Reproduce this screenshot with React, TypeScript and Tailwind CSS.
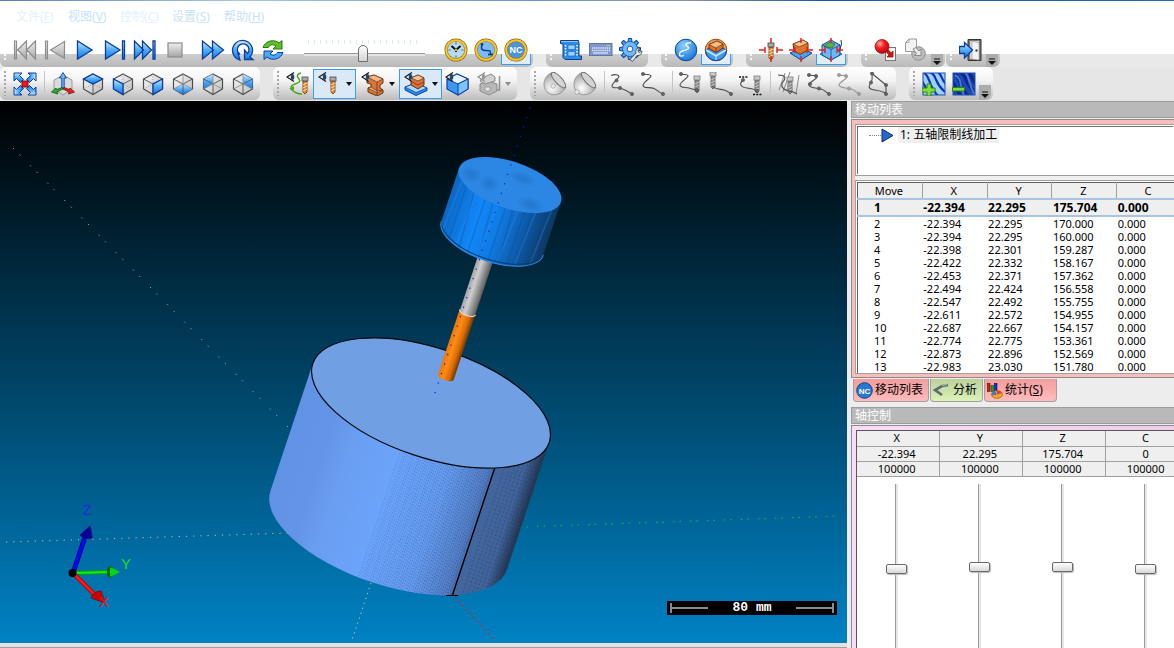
import { useState, type ReactNode } from "react";
import clsx from "clsx";

const MENUS = [
  { label: "文件", key: "F", tone: "text-[#e2f0f9]" },
  { label: "视图", key: "V", tone: "text-[#c6e2f6]" },
  { label: "控制", key: "C", tone: "text-[#e2f0f9]" },
  { label: "设置", key: "S", tone: "text-[#c6e2f6]" },
  { label: "帮助", key: "H", tone: "text-[#c6e2f6]" },
];

const MOVES = [
  ["1", "-22.394", "22.295", "175.704", "0.000"],
  ["2", "-22.394", "22.295", "170.000", "0.000"],
  ["3", "-22.394", "22.295", "160.000", "0.000"],
  ["4", "-22.398", "22.301", "159.287", "0.000"],
  ["5", "-22.422", "22.332", "158.167", "0.000"],
  ["6", "-22.453", "22.371", "157.362", "0.000"],
  ["7", "-22.494", "22.424", "156.558", "0.000"],
  ["8", "-22.547", "22.492", "155.755", "0.000"],
  ["9", "-22.611", "22.572", "154.955", "0.000"],
  ["10", "-22.687", "22.667", "154.157", "0.000"],
  ["11", "-22.774", "22.775", "153.361", "0.000"],
  ["12", "-22.873", "22.896", "152.569", "0.000"],
  ["13", "-22.983", "23.030", "151.780", "0.000"],
];

const AXES = [
  { name: "X", value: "-22.394" },
  { name: "Y", value: "22.295" },
  { name: "Z", value: "175.704" },
  { name: "C", value: "0" },
];

/* ---------- icons ---------- */

const BLUE = "#0b3f9e";

function Icon({ children }: { children: ReactNode }) {
  return (
    <svg width="24" height="24" viewBox="0 0 24 24" className="relative shrink-0" aria-hidden="true">
      {children}
    </svg>
  );
}

function Defs() {
  return (
    <svg width="0" height="0" className="absolute" aria-hidden="true">
      <defs>
        <linearGradient id="blue" x1="0" y1="0" x2="0" y2="1">
          <stop offset="0" stopColor="#d6ecff" />
          <stop offset="0.45" stopColor="#5cb0f8" />
          <stop offset="1" stopColor="#0a78e8" />
        </linearGradient>
        <linearGradient id="gray" x1="0" y1="0" x2="0" y2="1">
          <stop offset="0" stopColor="#f0f0f0" />
          <stop offset="1" stopColor="#a4a4a4" />
        </linearGradient>
        <linearGradient id="face" x1="0" y1="0" x2="1" y2="1">
          <stop offset="0" stopColor="#fafafa" />
          <stop offset="1" stopColor="#bdbdbd" />
        </linearGradient>
        <radialGradient id="ball" cx="0.4" cy="0.3" r="0.8">
          <stop offset="0" stopColor="#8fd0ff" />
          <stop offset="1" stopColor="#0b69d4" />
        </radialGradient>
        <radialGradient id="red" cx="0.35" cy="0.3" r="0.8">
          <stop offset="0" stopColor="#ffb0a8" />
          <stop offset="0.4" stopColor="#f52020" />
          <stop offset="1" stopColor="#b00008" />
        </radialGradient>
        <radialGradient id="dish" cx="0.35" cy="0.7" r="0.8">
          <stop offset="0" stopColor="#ffffff" />
          <stop offset="1" stopColor="#8e8e8e" />
        </radialGradient>
      </defs>
    </svg>
  );
}

const GRAY_STROKE = { fill: "url(#gray)", stroke: "#8c8c8c", strokeWidth: 1.2 };
const BLUE_STROKE = { fill: "url(#blue)", stroke: BLUE, strokeWidth: 1.3 };

const SkipStart = () => (
  <Icon>
    <path d="M1.5 3h2v18h-2zM13.5 3v18L4.5 12zM22.5 3v18L13.5 12z" {...GRAY_STROKE} />
  </Icon>
);
const StepBack = () => (
  <Icon>
    <path d="M2.5 3h2v18h-2zM21.5 3.5v17L7.5 12z" {...GRAY_STROKE} />
  </Icon>
);
const Play = () => (
  <Icon>
    <path d="M4.5 3v18L19 12z" {...BLUE_STROKE} />
  </Icon>
);
const StepNext = () => (
  <Icon>
    <path d="M2.5 3v18L17 12zM19.5 3h2v18h-2z" {...BLUE_STROKE} />
  </Icon>
);
const SkipEnd = () => (
  <Icon>
    <path d="M1.5 3v18L10.5 12zM9.5 3v18L18.5 12zM20 3h2v18h-2z" {...BLUE_STROKE} />
  </Icon>
);
const Stop = () => (
  <Icon>
    <rect x="5" y="5" width="14" height="14" {...GRAY_STROKE} />
  </Icon>
);
const Forward = () => (
  <Icon>
    <path d="M1.5 3v18L12.5 12zM11.5 3v18L22.5 12z" {...BLUE_STROKE} />
  </Icon>
);
const Loop = () => (
  <Icon>
    <path
      d="M9 22A10 10 0 1 1 19 19l3 2.5H13.5V12l3 3.5A5.8 5.8 0 1 0 9 16.5L6.5 13.5 9 22z"
      {...BLUE_STROKE}
    />
  </Icon>
);
const Refresh = () => (
  <Icon>
    <path d="M2 9.5C4 3 13 .5 18 5l3-2.5V11H12l3-3c-3-2-6-1.5-7.5 1.5z" fill="#5cc02c" stroke="#2d7a0c" />
    <path d="M22 14.5C20 21 11 23.5 6 19l-3 2.5V13h9l-3 3c3 2 6 1.5 7.5-1.5z" fill="#4aa8f6" stroke={BLUE} />
  </Icon>
);

function GoldRing({ children }: { children: ReactNode }) {
  return (
    <Icon>
      <circle cx="12" cy="12" r="11.5" fill="#8a6410" />
      <circle cx="12" cy="12" r="10.8" fill="#f7c52c" />
      <circle cx="12" cy="12" r="8.8" fill="#9a7410" />
      {children}
    </Icon>
  );
}
const Clock = () => (
  <GoldRing>
    <circle cx="12" cy="12" r="8.3" fill="#b4dcfa" />
    <path d="M12 4.5v2M12 17.5v2M4.5 12h2M17.5 12h2" stroke="#3c6ca0" strokeWidth="1.2" />
    <path d="M7.5 8l4.5 4 4.5-4M12 12v2" stroke="#111" strokeWidth="2" fill="none" />
    <circle cx="12" cy="12" r="1.3" fill="#e8b010" />
  </GoldRing>
);
const ToolPath = () => (
  <GoldRing>
    <circle cx="12" cy="12" r="8.3" fill="#7cbcf4" />
    <path d="M8 7c-1.5 4 0 5.500 4 5.500s4.500 0 4.500 3.500" stroke="#0a3c94" strokeWidth="1.400" fill="none" />
    <circle cx="8" cy="6.500" r="1.400" fill="#0a3c94" />
    <path d="M14 16.500h5" stroke="#0a3c94" strokeWidth="1.800" />
  </GoldRing>
);
const NcMode = () => (
  <GoldRing>
    <circle cx="12" cy="12" r="8.3" fill="#4c92dc" />
    <text x="12" y="15" textAnchor="middle" fontSize="9" fontWeight="700" fill="#fff" fontFamily="Liberation Sans">
      NC
    </text>
  </GoldRing>
);

const Film = () => (
  <Icon>
    <path d="M1.500 2.500h18l.5 3v12.500h2.500v3.500H6l-2-2V6L1.500 5.500z" fill="#2b8df0" stroke="#123c84" />
    <path d="M9 7h7v4.500H9zM9 13.500h7v4.500H9z" fill="#9cd2ff" stroke="#1458b0" strokeWidth=".6" />
    <path d="M6.500 7v12M18 7v12" stroke="#fff" strokeWidth="1.500" strokeDasharray="1.500 1.500" />
    <path d="M2 3.500h17" stroke="#8cc8fa" />
  </Icon>
);
const Keyboard = () => (
  <Icon>
    <rect x=".5" y="5.500" width="22.500" height="12" fill="#8296cc" stroke="#5f74ae" />
    <path d="M3 10h18M3 12.500h18" stroke="#e4ebfb" strokeWidth="1.300" strokeDasharray="1.300 .8" />
    <path d="M4 15h15" stroke="#e4ebfb" strokeWidth="1.200" />
    <path d="M17 7.500h4" stroke="#9ad868" />
  </Icon>
);
const Settings = () => (
  <Icon>
    <g transform="translate(11 11)">
      {[0, 45, 90, 135, 180, 225, 270, 315].map((a) => (
        <path key={a} d="M-2.2-6l.7-4.5h3l.7 4.5z" fill="#4da6f2" stroke={BLUE} transform={`rotate(${a})`} />
      ))}
      <circle r="7.5" fill="#6cbaf8" stroke={BLUE} strokeWidth=".6" />
      <circle r="2.8" fill="#fff" stroke={BLUE} strokeWidth=".8" />
    </g>
    <path
      d="M11 21.5l6-6.5c-1-3 1-5.500 4-5l-2 2.500 1 2 3-1.500c0 3-2 5-5 4.500L13.500 23.500z"
      fill="#e6e6e6"
      stroke="#4c4c4c"
      strokeWidth=".9"
    />
  </Icon>
);

const PathBall = () => (
  <Icon>
    <circle cx="12" cy="12" r="10.8" fill="url(#ball)" stroke="#084aa0" />
    <path d="M17 5c-5-.5-6 1-4.500 2.500s3.500 2.500.5 4-7 1-7.500 4 2 3 4.500 2" stroke="#fff" strokeWidth="1.300" fill="none" />
  </Icon>
);
const StockBall = () => (
  <Icon>
    <circle cx="12" cy="12" r="10.8" fill="#f0a05c" stroke="#a04810" />
    <path d="M1.500 12l4.500-2 6 4 6-4 4.500 2A10.500 10.500 0 0 1 12 22.500 10.500 10.500 0 0 1 1.500 12z" fill="#3a9cf2" stroke={BLUE} />
    <path d="M2 12l10 6 10-6" stroke="#d4ecff" strokeWidth="1.500" fill="none" />
    <path d="M5 6.500l8-3.500 6 3v4l-7 4.500-7-4z" fill="#d9732c" stroke="#70300a" />
    <path d="M5 6.500l7 3.500 7-4-6-3z" fill="#f6bd8a" stroke="#70300a" strokeWidth=".7" />
    <path d="M12 10v4" stroke="#70300a" strokeWidth=".8" />
    <path d="M12 18v4" stroke="#d4ecff" />
  </Icon>
);

function Cross() {
  return <path d="M12 0v5M12 18v6M0 12h6M18 12h6M6 9v6M18 9v6" stroke="#f01c1c" strokeWidth="1.5" fill="none" />;
}
function Mill({ x = 0, y = 0, gray }: { x?: number; y?: number; gray?: boolean }) {
  return (
    <g transform={`translate(${x} ${y})`}>
      <path d="M2 6h4v11l-2 2-2-2z" fill={gray ? "#8c8c8c" : "#f08a2c"} stroke={gray ? "#555" : "#6c3408"} strokeWidth=".8" />
      <path d="M2 10l4-2M2 13l4-2M2 16l4-2" stroke={gray ? "#d4d4d4" : "#fff0c8"} strokeWidth=".9" />
      <rect x="1" y="2" width="6" height="4" fill={gray ? "#c8c8c8" : "#ababab"} stroke={gray ? "#808080" : "#484848"} strokeWidth=".8" />
    </g>
  );
}
const ToolCenter = () => (
  <Icon>
    <Mill x={8} y={3} />
    <Cross />
  </Icon>
);
const StockCenter = () => (
  <Icon>
    <path d="M1 15l11-5 11 5-11 7z" fill="#49a2f0" stroke={BLUE} />
    <path d="M4 6l10-4 5 3v7l-8 4.500-6-4z" fill="#d9762e" stroke="#713208" />
    <path d="M4 6l6 3 9-4-5-3z" fill="#f5bf8c" stroke="#713208" strokeWidth=".7" />
    <Cross />
  </Icon>
);
const MachineCenter = () => (
  <Icon>
    <path d="M1 16l11-6 11 6-11 6z" fill="#c9dff2" stroke="#346292" />
    <path d="M3 7l9-5 9 5v10l-9 5-9-5z" fill="#6cb8f2" stroke="#0d4e9c" />
    <path d="M3 7l9 4.500L21 7M12 11.500V22" stroke="#0d4e9c" strokeWidth=".8" fill="none" />
    <path d="M5 8l6-4 5 2-3 4-5-1z" fill="#54b43e" stroke="#1d6430" strokeWidth=".7" />
    <path d="M22 2l.5 4-2.500 8" stroke="#333" fill="none" />
    <Cross />
  </Icon>
);

const RedBallExport = () => (
  <Icon>
    <rect x="11.5" y="9.5" width="10" height="13" fill="#f4f4f4" stroke="#777" />
    <circle cx="8" cy="8.500" r="7" fill="url(#red)" stroke="#960c0c" strokeWidth=".7" />
    <path d="M12 13.500l2.500-1.500 2.500 3 2-2v6h-6l2-2z" fill="#d81414" stroke="#800" strokeWidth=".7" />
  </Icon>
);
const DocExport = () => (
  <Icon>
    <circle cx="14.500" cy="15.500" r="6.800" fill="#bcbcbc" stroke="#909090" />
    <path d="M1.500 4.500l3.500-3.500h7.500v12.500h-11z" fill="#f2f2f2" stroke="#9a9a9a" />
    <path d="M5 1v3.500H1.500" stroke="#9a9a9a" strokeWidth=".8" fill="none" />
    <path d="M9 11l3-1.500 3 3.500 2-2v6.500h-6.500l2-2z" fill="#e8e8e8" stroke="#8c8c8c" />
  </Icon>
);
const Exit = () => (
  <Icon>
    <path d="M9 1.500h13v21H9z" fill="#777" stroke="#333" />
    <path d="M11 3h9v18h-9z" fill="#d7d7d7" />
    <path d="M13 3l7 2v17l-7-1z" fill="#f4f4f4" stroke="#999" strokeWidth=".6" />
    <circle cx="17.500" cy="12.500" r="1.200" fill="#444" />
    <path d="M.5 8.500h5V4.500L13.500 12l-8 8v-4.500h-5z" {...BLUE_STROKE} />
  </Icon>
);

const FitAll = () => (
  <Icon>
    {[0, 90, 180, 270].map((a) => (
      <path
        key={a}
        d="M1 1h8L6.500 3.500l4 4-3 3-4-4L1 9z"
        {...BLUE_STROKE}
        strokeWidth="1"
        transform={`rotate(${a} 12 12)`}
      />
    ))}
    <rect x="9" y="9" width="6" height="6" fill="#e41c1c" stroke="#8c0808" />
  </Icon>
);
const IsoAxes = () => (
  <Icon>
    <path d="M12 3l9 5v9l-9 6-9-6V8z" fill="#dadada" stroke="#888" strokeWidth=".8" />
    <path d="M12 .5l3.500 5.500h-2.300v10h-2.400V6H8.500z" fill="#72b8f8" stroke={BLUE} strokeWidth=".9" />
    <path d="M11 15.500l-5.500 2-.5-1.500L.5 20l6 2-.5-2 6-3z" fill="#2eaa2e" stroke="#0c5a10" strokeWidth=".8" />
    <path d="M13 15.500l5.500 2 .5-1.500 4.500 4-6 2 .5-2-6-3z" fill="#e02222" stroke="#7c0808" strokeWidth=".8" />
  </Icon>
);

const FACES = {
  top: "M12 2l9.5 5L12 12 2.5 7z",
  left: "M2.5 7L12 12v10.5L2.5 17z",
  right: "M21.5 7L12 12v10.5l9.5-5.5z",
  bottom: "M2.5 17L12 12l9.5 5-9.5 5.5z",
  backLeft: "M2.5 7L12 2v10l-9.5 5z",
  backRight: "M21.5 7L12 2v10l9.5 5z",
};

function Cube({ face }: { face: keyof typeof FACES }) {
  const hidden = face === "bottom" || face === "backLeft" || face === "backRight";
  return (
    <Icon>
      <path d="M12 2l9.5 5v10L12 22.5 2.5 17V7z" fill="url(#face)" stroke="#4c4c4c" strokeWidth="1.2" />
      <path d={FACES[face]} fill="url(#blue)" />
      <path d="M2.5 7L12 12l9.5-5M12 12v10.5" stroke="#5c5c5c" fill="none" />
      <path d="M12 2v10M2.5 17L12 12l9.5 5" stroke="#888" strokeWidth=".8" strokeDasharray={hidden ? undefined : "1 1.5"} fill="none" />
      {!hidden && <path d={FACES[face]} fill="url(#blue)" stroke={BLUE} strokeWidth="1.3" />}
    </Icon>
  );
}

function Eye({ gray }: { gray?: boolean }) {
  return (
    <g>
      <path d="M8 .5L1 5l7 4.5" stroke={gray ? "#888" : "#111"} strokeWidth="1.2" fill="#fff" />
      <ellipse cx="6.5" cy="5" rx="1.8" ry="3" fill={gray ? "#999" : "#1e4868"} />
    </g>
  );
}
const EyePath = () => (
  <Icon>
    <path d="M15 1c-5 1-4 4-2 6s0 4-4 5-5 4-3 6 5 4 10 4" stroke="#48a41c" strokeWidth="1.500" fill="none" />
    <path d="M3 17l5-3v4z" fill="#48a41c" />
    <Mill x={15} y={3} />
    <Eye />
  </Icon>
);
const EyeTool = () => (
  <Icon>
    <Mill x={11} y={3} />
    <Eye />
  </Icon>
);
const EyePart = () => (
  <Icon>
    <path d="M6 5l7-2 9 4v4l-3 2v3l3 2v3l-6 3-9-4v-4l3-1v-3L6 11z" fill="#d8763a" stroke="#6c300a" />
    <path d="M6 5l7-2 9 4-6 3zM7 16l3-1 6 4 6-1-6 3z" fill="#f4b888" stroke="#6c300a" strokeWidth=".7" />
    <path d="M16 10v13" stroke="#6c300a" strokeWidth=".7" />
    <Eye />
  </Icon>
);
const EyeStock = () => (
  <Icon>
    <path d="M1 15l11-4 11 5v2.5L12 23.5 1 18z" fill="#2a8cf0" stroke={BLUE} />
    <path d="M1 15l11-4 11 5-11 4.5z" fill="#a8dbff" stroke={BLUE} strokeWidth=".7" />
    <path d="M7 6l7-3 6 3v7l-6 4-7-4z" fill="#d8703a" stroke="#6c300a" />
    <path d="M7 6l7-3 6 3-6 3z" fill="#f8c298" stroke="#6c300a" strokeWidth=".7" />
    <path d="M7 9.5l7 3.5 6-3" stroke="#6c300a" strokeWidth=".7" fill="none" />
    <Eye />
  </Icon>
);
const EyeCube = () => (
  <Icon>
    <path d="M2 7l10-5 11 5v10l-10 6-11-6z" fill="#3a98f2" stroke={BLUE} strokeWidth="1.2" />
    <path d="M2 7l10-5 11 5-10 5z" fill="#e4f4ff" stroke={BLUE} />
    <path d="M13 12l10-5v10l-10 6z" fill="#7cc4fc" stroke={BLUE} />
    <Eye />
  </Icon>
);
const EyeMachine = () => (
  <Icon>
    <path d="M3 12l8-3 9 3v7l-8 4-9-4z" fill="#b8b8b8" stroke="#8a8a8a" />
    <path d="M5 6l9-4 4 3v4L8 12 3 9z" fill="#d0d0d0" stroke="#8a8a8a" />
    <path d="M8 15h5v4H8z" fill="#e6e6e6" stroke="#8a8a8a" strokeWidth=".7" />
    <path d="M22.5 4v14h-3" stroke="#909090" strokeWidth="1.5" fill="none" />
    <Eye gray />
  </Icon>
);

function Dish({ dx, dy }: { dx: number; dy: number }) {
  return (
    <Icon>
      <path d="M8 1C1 4-2 15 5 21c6 4 15 1 18-6z" fill="url(#dish)" stroke="#8c8c8c" strokeWidth=".8" />
      <ellipse cx="15.500" cy="8" rx="3.500" ry="10" fill="#d4d4d4" stroke="#707070" transform="rotate(-42 15.500 8)" />
      <circle cx={dx} cy={dy} r="2.300" fill="#e8e8e8" stroke="#909090" strokeWidth=".6" />
    </Icon>
  );
}

function Curve({ d, dots, children, faint }: { d: string; dots: number[][]; children?: ReactNode; faint?: boolean }) {
  const ink = faint ? "#909090" : "#4c4c4c";
  return (
    <Icon>
      {children}
      <path d={d} stroke={ink} strokeWidth="1.1" fill="none" />
      {dots.map(([x, y]) => (
        <circle key={`${x}-${y}`} cx={x} cy={y} r="1.6" fill={faint ? "#a0a0a0" : "#666"} stroke={ink} strokeWidth=".7" />
      ))}
    </Icon>
  );
}

const CurveA = () => (
  <Curve d="M0 3.5c3-1.500 8-1 8 1S1 11 1 14s5 1 8 2 8 3 12 6" dots={[[5.5, 8.5], [9, 16], [21, 22]]} />
);
const CurveB = () => <Curve d="M2 2c3 1 8 0 8 2S2 10 2 13.500s7 1 11 3 5 4 9 5.500" dots={[[2, 2], [22, 22]]} />;
const CurveMill = () => (
  <Curve d="M2 2c3 1 7 0 7 2S1 10 1 13s5 2 9 3 6 2 9 2" dots={[[2, 2], [18, 18]]}>
    <Mill x={14} y={2} gray />
  </Curve>
);
const MillCurve = () => (
  <Curve d="M3 14c2 3 8 3 12 4s4 2 7 4" dots={[[22, 22]]}>
    <Mill x={0} y={-2} gray />
  </Curve>
);
const MillGap = () => (
  <Curve d="M4 8c-4 4-3 7 4 8s8 1 10 3" dots={[[4, 8], [18, 19]]}>
    <path d="M0 5h9M14 22.5h9" stroke="#111" strokeWidth="1.4" strokeDasharray="2 1.2" />
    <Mill x={14} y={2} gray />
  </Curve>
);
const MillFan = () => (
  <Curve d="M1 3c8 0 8 3 5 7s0 8 6 9 6 2 8 3" dots={[]}>
    <path d="M8 1L2 18M13 0L6 20M22 3l-3 19" stroke="#888" />
    <Mill x={9} y={3} gray />
  </Curve>
);
const CurveNodes = () => (
  <Curve
    d="M2 3c3 1 8 0 8 2S2 10 2 13s8 3 12 4 4 3 8 5"
    dots={[[2, 3], [9, 4], [3, 12], [12, 16.5], [22, 22]]}
  />
);
const CurveFaint = () => (
  <Curve faint d="M2 3c3 1 8 0 8 2S2 10 2 13s8 3 12 4 4 3 8 5" dots={[[2, 3], [9, 4], [12, 16.5], [22, 22]]} />
);
const CurveLoop = () => (
  <Curve d="M5 1.500c0 5 1 6-1 9s-3 6 1 7 10 1 14 4V13z" dots={[[5, 1.5], [4, 10.5], [19, 13], [19, 22]]} />
);

function Waves({ sign }: { sign: "+" | "-" }) {
  const plus = sign === "+";
  return (
    <Icon>
      <clipPath id={plus ? "wp" : "wm"}>
        <path d="M1 1h22v22H1z" />
      </clipPath>
      <rect x="1" y="1" width="22" height="22" fill={plus ? "#9cd0fc" : "#1c48b8"} />
      <g clipPath={plus ? "url(#wp)" : "url(#wm)"} fill="none">
        <path
          d="M-5 6c7 1 6 8 14 18M1 0c8 4 4 12 15 24M7 0c9 3 4 10 16 20M14-1c7 3 4 8 11 14"
          stroke={plus ? "#1230b0" : "#10288c"}
          strokeWidth={plus ? 2.2 : 3.5}
        />
        {!plus && <path d="M11-1c8 5 4 12 12 24M3 3c8 4 4 12 10 22" stroke="#5c98ec" strokeWidth="2" strokeOpacity=".7" />}
      </g>
      <rect x="1" y="1" width="22" height="22" fill="none" stroke="#1c50b0" />
      <path d={plus ? "M5 12h4v4h4v4H9v4H5v-4H0v-4h5z" : "M.5 15.5h12v3.500H.5z"} fill="#84dc3c" stroke="#2c8410" />
    </Icon>
  );
}

/* ---------- toolbar pieces ---------- */

function Grip() {
  return (
    <span className="flex w-2.5 shrink-0 justify-center self-stretch py-1">
      <span className="w-0.5 bg-[repeating-linear-gradient(to_bottom,#a8a8a8_0px,#a8a8a8_2px,transparent_2px,transparent_4px)]" />
    </span>
  );
}

function Sep() {
  return (
    <span className="flex w-2 shrink-0 justify-center self-stretch pt-1 pb-2">
      <span className="w-px bg-[#c4c4c4]" />
    </span>
  );
}

function TopGroup({ children }: { children: ReactNode }) {
  return (
    <div className="flex shrink-0 items-start rounded-b-md bg-[linear-gradient(to_bottom,#fff_18px,#cecece_18px,#b9b9b9)] pr-0.5">
      <span className="flex w-2.5 shrink-0 justify-center pt-[18px]">
        <span className="h-2 w-0.5 bg-[repeating-linear-gradient(to_bottom,#f8f8f8_0px,#f8f8f8_2px,transparent_2px,transparent_4px)]" />
      </span>
      {children}
    </div>
  );
}

function TopButton({ label, active, children }: { label: string; active?: boolean; children: ReactNode }) {
  return (
    <button type="button" aria-label={label} className="relative flex h-[29px] w-[30px] shrink-0 items-center justify-center pb-px">
      {active && <span className="absolute inset-x-0 bottom-0 h-[11px] border-x border-b border-[#3c9cf0] bg-[#dfecf9]" />}
      {children}
    </button>
  );
}

function Group({ children }: { children: ReactNode }) {
  return (
    <div className="flex shrink-0 items-center rounded-md bg-[linear-gradient(to_bottom,#fff,#f4f4f4_40%,#bcbcbc)] pr-0.5">
      <Grip />
      {children}
    </div>
  );
}

function Tool({ label, menu, active, disabled, children }: {
  label: string;
  menu?: boolean;
  active?: boolean;
  disabled?: boolean;
  children: ReactNode;
}) {
  return (
    <button
      type="button"
      aria-label={label}
      className={clsx(
        "flex h-[30px] shrink-0 items-center justify-center",
        menu ? "w-[43px] gap-1" : "w-[30px]",
        active && "bg-[#d9e9f8] outline -outline-offset-1 outline-[#3c9cf0]",
      )}
    >
      {children}
      {menu && (
        <svg width="6" height="4" viewBox="0 0 6 4" aria-hidden="true">
          <path d="M0 0h6L3 4z" fill={disabled ? "#8c8c8c" : "#111"} />
        </svg>
      )}
    </button>
  );
}

function Overflow() {
  return (
    <button type="button" aria-label="更多" className="flex w-3 shrink-0 items-end justify-center self-stretch rounded-r-md bg-[linear-gradient(to_bottom,transparent_18px,#acacac_18px)] pb-0.5">
      <svg width="8" height="7" viewBox="0 0 8 7" aria-hidden="true">
        <path d="M1 1h6" stroke="#111" />
        <path d="M0 3h8L4 7z" fill="#111" />
      </svg>
    </button>
  );
}

function Speed() {
  const [speed, setSpeed] = useState(49);
  return (
    <div className="mx-2 flex h-[29px] w-[121px] shrink-0 flex-col pt-1">
      <div className="mx-1 h-1 bg-[repeating-linear-gradient(to_right,#d8eaf0_0px,#d8eaf0_1px,transparent_1px,transparent_6px)]" />
      <input
        type="range"
        aria-label="速度"
        value={speed}
        onChange={(e) => setSpeed(Number(e.target.value))}
        className="h-5 w-full appearance-none bg-transparent [&::-webkit-slider-runnable-track]:h-[3px] [&::-webkit-slider-runnable-track]:border-t [&::-webkit-slider-runnable-track]:border-[#989898] [&::-webkit-slider-runnable-track]:bg-[#e4e4e4] [&::-webkit-slider-thumb]:-mt-[9px] [&::-webkit-slider-thumb]:h-[17px] [&::-webkit-slider-thumb]:w-2.5 [&::-webkit-slider-thumb]:appearance-none [&::-webkit-slider-thumb]:rounded-t-full [&::-webkit-slider-thumb]:rounded-b-xs [&::-webkit-slider-thumb]:border [&::-webkit-slider-thumb]:border-[#6c6c6c] [&::-webkit-slider-thumb]:bg-[linear-gradient(#fff,#d4d4d4)]"
      />
    </div>
  );
}

/* ---------- 3D view ---------- */

// shading bands on the side wall of the stock, spaced along its width
const BANDS = Array.from({ length: 82 }, (_, i) => {
  const x = -84 + i * 2;
  const dark = x > -16;
  const ripple = (Math.sin(i * 1.7) + 1) * 0.08;
  return { x, dark, alpha: dark ? 0.12 + ((x + 16) / 96) * 0.35 + ripple : 0.14, shift: (i * 7) % 5 };
});

const HEAD_BANDS = [-46, -41, -33, -28, -19, -12, -4, 3, 9, 17, 22, 28, 34, 38, 43, 48];

function Scene() {
  return (
    <svg viewBox="0 101 847 542" preserveAspectRatio="xMidYMid slice" className="block h-full w-full" role="img" aria-label="仿真视图">
      <defs>
        <linearGradient id="wall" x1="0" x2="1" y1="0" y2="0">
          <stop offset="0" stopColor="#6292e4" />
          <stop offset="0.16" stopColor="#6494e6" />
          <stop offset="0.24" stopColor="#699df0" />
          <stop offset="0.45" stopColor="#6ca4fb" />
          <stop offset="0.65" stopColor="#669cf0" />
          <stop offset="0.8" stopColor="#547fc6" />
          <stop offset="0.83" stopColor="#42669e" />
          <stop offset="0.94" stopColor="#3f6298" />
          <stop offset="1" stopColor="#22344f" />
        </linearGradient>
        <linearGradient id="headWall" x1="0" x2="1" y1="0" y2="0">
          <stop offset="0" stopColor="#0c66c2" />
          <stop offset="0.3" stopColor="#1187f8" />
          <stop offset="0.5" stopColor="#107ce6" />
          <stop offset="0.8" stopColor="#0d559e" />
          <stop offset="1" stopColor="#0d3760" />
        </linearGradient>
        <linearGradient id="shank" x1="0" x2="1" y1="0" y2="0">
          <stop offset="0" stopColor="#a4a4a4" />
          <stop offset="0.35" stopColor="#cdcdcd" />
          <stop offset="1" stopColor="#5c5c5c" />
        </linearGradient>
        <linearGradient id="cutter" x1="0" x2="1" y1="0" y2="0">
          <stop offset="0" stopColor="#e87808" />
          <stop offset="0.35" stopColor="#ff8a14" />
          <stop offset="0.7" stopColor="#d86c08" />
          <stop offset="1" stopColor="#6c3804" />
        </linearGradient>
        <radialGradient id="patch">
          <stop offset="0" stopColor="#1c6cc0" stopOpacity=".6" />
          <stop offset="1" stopColor="#1c6cc0" stopOpacity="0" />
        </radialGradient>
      </defs>

      <g strokeWidth="1" fill="none">
        <path d="M13 148L290 429" stroke="#b8b2a4" strokeDasharray="1.2 8 1.2 14" />
        <path d="M6 542L290 533" stroke="#e8b08c" strokeDasharray="1.2 6" />
        <path d="M371 583L352 640" stroke="#dcc4a4" strokeDasharray="1.2 4" />
        <path d="M455 597L495 640" stroke="#f01414" strokeWidth="1.3" strokeDasharray="1.5 4" />
        <path d="M520 527L840 516" stroke="#18b44c" strokeWidth="1.2" strokeDasharray="1.5 5 1.5 9" />
      </g>

      <g transform="translate(431 403) rotate(18.4)">
        <path d="M-124.6 0V134A124.6 54.7 0 0 0 124.6 134V0z" fill="url(#wall)" />
        <clipPath id="stockClip">
          <path d="M-124.6 0V134A124.6 54.7 0 0 0 124.6 134V0z" />
        </clipPath>
        <g clipPath="url(#stockClip)">
          {BANDS.map((b) => (
            <path
              key={b.x}
              d={`M${b.x} 0V190`}
              stroke={b.dark ? "#2d4f8c" : "#86b2fa"}
              strokeOpacity={b.alpha}
              strokeDasharray="1.5 1.5"
              strokeDashoffset={b.shift}
            />
          ))}
          {[90, 95, 99, 103, 107, 111, 114, 117, 120, 122].map((x) => (
            <path key={x} d={`M${x} 0V190`} stroke="#1e2f50" strokeOpacity=".3" strokeDasharray="2 2" />
          ))}
          <path d="M81 41V176" stroke="#000" strokeWidth="1.4" />
        </g>
        <ellipse rx="124.6" ry="54.7" fill="#709fe3" stroke="#05080f" strokeWidth="1.2" />
      </g>
      <path d="M446 595.500h12" stroke="#000" />

      <g transform="translate(510 185) rotate(18.4)">
        <path d="M-8 70V136A8 3.3 0 0 0 8 136V70z" fill="url(#shank)" />
        <path d="M-8.500 134V203A8.500 3.600 0 0 0 8 203V134A8 3.600 0 0 1-8.500 134z" fill="url(#cutter)" />
        <path d="M-8.500 134A8.500 3.600 0 0 0 8.500 134" stroke="#e8dccc" fill="none" />
        <path d="M-53.7 0V56A53.7 23.5 0 0 0 53.7 56V0z" fill="url(#headWall)" />
        <clipPath id="headClip">
          <path d="M-53.7 0V56A53.7 23.5 0 0 0 53.7 56V0z" />
        </clipPath>
        <g clipPath="url(#headClip)">
          {HEAD_BANDS.map((x, i) => (
            <path
              key={x}
              d={`M${x} 0l${((i % 3) - 1) * 5} 84`}
              stroke={i % 3 ? "#0a4d96" : "#3898f8"}
              strokeWidth="1.500"
              strokeOpacity=".28"
            />
          ))}
        </g>
        <path d="M-53.7 54A53.7 23.5 0 0 0 53.7 54" stroke="#0a3c70" fill="none" />
        <path d="M-53.7 56A53.7 23.5 0 0 0 53.7 56" stroke="#2c8ce8" fill="none" />
        <ellipse rx="53.7" ry="23.5" fill="#2c87e4" />
        <g fill="url(#patch)">
          <ellipse cx="-20" cy="5" rx="11" ry="9" />
          <ellipse cx="26" cy="12" rx="16" ry="8" />
          <ellipse cx="-40" cy="2" rx="12" ry="9" />
          <ellipse cx="10" cy="-10" rx="16" ry="7" />
        </g>
        <path d="M-5.5-80V230" stroke="#1414f4" strokeWidth="1.2" strokeDasharray="1.2 8.8" />
      </g>

      <g strokeLinecap="round">
        <path d="M73 573L84 540" stroke="#000a70" strokeWidth="5" />
        <path d="M73 573L84 540" stroke="#0808f0" strokeWidth="3.5" />
        <path d="M90 526L80 535q4 5 12 3z" fill="#0000a0" stroke="#000050" strokeWidth=".6" />
        <path d="M74 573L110 572" stroke="#00a000" strokeWidth="4" />
        <path d="M74 573L110 572" stroke="#10ee10" strokeWidth="2.2" />
        <ellipse cx="110" cy="572" rx="3" ry="6" fill="#006400" />
        <path d="M110 567l10 5-10 5z" fill="#08d808" />
        <path d="M74 574L94 594" stroke="#a00000" strokeWidth="4.5" />
        <path d="M74 574L94 594" stroke="#fa1818" strokeWidth="2.8" />
        <path d="M105 603L91 598q2-7 10-7z" fill="#c80404" stroke="#700000" strokeWidth=".6" />
        <circle cx="72.5" cy="573" r="4" fill="#000" />
      </g>
      <g fontFamily="Liberation Sans" fontSize="15" textAnchor="middle">
        <text x="87" y="515" fill="#2424f0">Z</text>
        <text x="126" y="569" fill="#18e018">Y</text>
        <text x="104" y="607" fill="#e01818">X</text>
      </g>
    </svg>
  );
}

function ScaleBar() {
  return (
    <div className="absolute right-2.5 bottom-7 flex h-3.5 w-[170px] items-center bg-black px-[3px] font-['Liberation_Mono',monospace] text-[13px] leading-[14px] font-bold text-white">
      <span className="h-2.5 w-0.5 bg-[#8c8c8c]" />
      <span className="h-0.5 w-9 bg-[#8c8c8c]" />
      <span className="flex-1 text-center">80 mm</span>
      <span className="h-0.5 w-9 bg-[#8c8c8c]" />
      <span className="h-2.5 w-0.5 bg-[#8c8c8c]" />
    </div>
  );
}

/* ---------- right dock ---------- */

function DockTitle({ children }: { children: ReactNode }) {
  return (
    <h2 className="h-[17px] shrink-0 border border-r-0 border-[#9c9c9c] bg-[#b9b9b9] pl-[3px] text-xs leading-[15px] font-normal text-white">
      {children}
    </h2>
  );
}

function MoveList() {
  const [current, setCurrent] = useState("1");
  return (
    <section className="mt-px shrink-0 overflow-hidden border-t border-b border-l border-[#8c8c8c] bg-[#fbbcbc] pt-1 pb-[3px] pl-[3px]">
      <div className="h-[52px] border border-r-0 border-[#a0a0a0] bg-white shadow-[inset_0_0_0_1px_#fff,inset_1px_1px_0_1px_#707070]">
        <div className="flex items-center pt-0.5 pl-[13px]">
          <span className="w-3 border-t border-dotted border-[#888]" />
          <svg width="13" height="15" viewBox="0 0 13 15" aria-hidden="true">
            <path d="M1 1v13l11-6.5z" fill="#2468c8" stroke="#0c2c74" />
          </svg>
          <span className="ml-1 bg-[#efefef] px-0.5 text-xs leading-4 text-black">1: 五轴限制线加工</span>
        </div>
      </div>
      <div className="h-1 bg-[#efefef]" />
      <div className="overflow-hidden border border-r-0 border-[#a0a0a0] bg-white pt-px pl-px">
        <table className="w-[325px] table-fixed border-collapse border-t border-l border-[#606060] text-[11px] text-black">
          <thead>
            <tr className="h-4 bg-[#efefef]">
              {["Move", "X", "Y", "Z", "C"].map((h) => (
                <th key={h} className="border-r border-b border-[#a0a0a0] p-0 pr-0.5 text-center leading-[15px] font-normal">
                  {h}
                </th>
              ))}
            </tr>
          </thead>
          <tbody>
            {MOVES.map((row) => (
              <tr
                key={row[0]}
                onClick={() => setCurrent(row[0])}
                className={clsx(
                  row[0] === current
                    ? "h-[17px] border-y-2 border-[#a8c4de] bg-[#efefef] text-xs leading-[14px] font-bold"
                    : "h-[13px] leading-[13px]",
                )}
              >
                {row.map((cell, i) => (
                  <td key={i} className={clsx("p-0", i === 0 ? "pl-4" : "pl-px")}>
                    {cell}
                  </td>
                ))}
              </tr>
            ))}
          </tbody>
        </table>
      </div>
    </section>
  );
}

function DockTabs() {
  const tab = "flex h-[23px] items-center rounded-b-sm border border-t-0 border-[#a0a0a0] text-xs text-black";
  return (
    <nav className="flex h-[29px] shrink-0 items-start gap-px pt-px pl-0.5">
      <button type="button" className={clsx(tab, "w-[76px] gap-0.5 bg-[linear-gradient(#f29c9c,#ffbcbc)] pl-0.5")}>
        <svg width="17" height="17" viewBox="0 0 17 17" aria-hidden="true">
          <circle cx="8.5" cy="8.5" r="7.8" fill="#2878d0" stroke="#0c4890" />
          <text x="8.5" y="11.5" textAnchor="middle" fontSize="8" fontWeight="700" fill="#fff" fontFamily="Liberation Sans">
            NC
          </text>
        </svg>
        移动列表
      </button>
      <button type="button" className={clsx(tab, "w-[53px] gap-1 bg-[linear-gradient(#bcd09c,#dcf2b8)] pl-0.5")}>
        <svg width="16" height="14" viewBox="0 0 16 14" aria-hidden="true">
          <path d="M15 2L9 3 2 7l7 5" stroke="#5c6c70" strokeWidth="2.6" fill="none" />
          <path d="M14 1.5L9 2.5" stroke="#b8c4c4" strokeWidth="1" />
        </svg>
        分析
      </button>
      <button type="button" className={clsx(tab, "w-[73px] gap-0.5 bg-[linear-gradient(#f29c9c,#ffbcbc)] pl-0.5")}>
        <svg width="16" height="17" viewBox="0 0 16 17" aria-hidden="true">
          <rect x=".5" y="1.5" width="2.5" height="8" fill="#e01818" stroke="#600" strokeWidth=".6" />
          <rect x="4" y="3.5" width="2.5" height="6" fill="#18a828" stroke="#050" strokeWidth=".6" />
          <rect x="7.5" y="1.5" width="2.5" height="8" fill="#1830e0" stroke="#006" strokeWidth=".6" />
          <ellipse cx="10" cy="12.5" rx="5.5" ry="3.8" fill="#f4a81c" stroke="#9c5c08" strokeWidth=".7" />
          <path d="M10 12.5L15 11q-1-2.5-5-2.5z" fill="#e83838" />
          <path d="M10 12.5l-5 1q-1-3 3-4.5z" fill="#3878e0" />
        </svg>
        <span>
          统计(<u>S</u>)
        </span>
      </button>
    </nav>
  );
}

function AxisControl() {
  const [feed, setFeed] = useState([50, 51, 51, 50]);
  const cell = "border-r border-b border-[#a0a0a0] p-0 pr-[3px] text-center font-normal";
  return (
    <section className="mt-px flex-1 overflow-hidden border-t border-l border-[#8c8c8c] bg-[linear-gradient(to_right,#fadcf8,#f2cce8)] pt-1 pl-1">
      <div className="h-full border-t border-l border-[#585858] bg-white">
        <table className="w-[332px] table-fixed border-collapse bg-[#efefef] text-[11px] leading-[14px] text-black">
          <thead>
            <tr className="h-[15px]">
              {AXES.map((a) => (
                <th key={a.name} className={cell}>
                  {a.name}
                </th>
              ))}
            </tr>
          </thead>
          <tbody>
            <tr className="h-[15px]">
              {AXES.map((a) => (
                <td key={a.name} className={cell}>
                  {a.value}
                </td>
              ))}
            </tr>
            <tr className="h-[15px]">
              {AXES.map((a) => (
                <td key={a.name} className={cell}>
                  100000
                </td>
              ))}
            </tr>
          </tbody>
        </table>
        <div className="grid w-[332px] grid-cols-4 pt-[7px]">
          {AXES.map((a, i) => (
            <div key={a.name} className="flex justify-center pr-1">
              <input
                type="range"
                aria-label={a.name}
                value={feed[i]}
                onChange={(e) => setFeed(feed.map((f, n) => (n === i ? Number(e.target.value) : f)))}
                className="h-[170px] w-[21px] appearance-none bg-transparent [direction:rtl] [writing-mode:vertical-lr] [&::-webkit-slider-runnable-track]:w-[3px] [&::-webkit-slider-runnable-track]:border-l [&::-webkit-slider-runnable-track]:border-[#9c9c9c] [&::-webkit-slider-runnable-track]:bg-[#e6e6e6] [&::-webkit-slider-thumb]:-ml-[10px] [&::-webkit-slider-thumb]:h-2.5 [&::-webkit-slider-thumb]:w-[21px] [&::-webkit-slider-thumb]:appearance-none [&::-webkit-slider-thumb]:rounded-xs [&::-webkit-slider-thumb]:border [&::-webkit-slider-thumb]:border-[#686868] [&::-webkit-slider-thumb]:bg-[linear-gradient(#fff,#d8d8d8)] [&::-webkit-slider-thumb]:shadow-[1px_1px_1px_#bbb]"
              />
            </div>
          ))}
        </div>
      </div>
    </section>
  );
}

export default function App() {
  return (
    <div className="flex h-screen flex-col overflow-hidden bg-[#ededed] font-['Noto_Sans','Noto_Sans_CJK_SC',sans-serif]">
      <Defs />
      <div className="h-px shrink-0 bg-[linear-gradient(to_right,#5c7cc0,#a8c4e8_20%,#6c94d0_45%,#8a94a8_58%,#1c58a8_70%,#2864b0)]" />
      <nav className="flex h-[35px] shrink-0 items-start bg-white pl-4">
        {MENUS.map((m) => (
          <button key={m.key} type="button" className={clsx("h-8 w-[52px] shrink-0 text-left text-xs", m.tone)}>
            {m.label}(<u>{m.key}</u>)
          </button>
        ))}
      </nav>

      <div className="flex h-[31px] shrink-0 gap-[13px] overflow-hidden bg-[linear-gradient(to_bottom,#fff_18px,#e9e9e9_18px)]">
        <TopGroup>
          <TopButton label="回到起点"><SkipStart /></TopButton>
          <TopButton label="上一步"><StepBack /></TopButton>
          <TopButton label="播放"><Play /></TopButton>
          <TopButton label="下一步"><StepNext /></TopButton>
          <TopButton label="到终点"><SkipEnd /></TopButton>
          <TopButton label="停止"><Stop /></TopButton>
          <span className="w-2" />
          <TopButton label="快进"><Forward /></TopButton>
          <TopButton label="循环"><Loop /></TopButton>
          <TopButton label="刷新"><Refresh /></TopButton>
          <span className="w-2" />
          <Speed />
          <span className="w-2" />
          <TopButton label="时间"><Clock /></TopButton>
          <TopButton label="刀路"><ToolPath /></TopButton>
          <TopButton label="NC" active><NcMode /></TopButton>
        </TopGroup>
        <TopGroup>
          <TopButton label="录像"><Film /></TopButton>
          <TopButton label="键盘"><Keyboard /></TopButton>
          <TopButton label="选项"><Settings /></TopButton>
        </TopGroup>
        <TopGroup>
          <TopButton label="路径模式"><PathBall /></TopButton>
          <TopButton label="毛坯模式" active><StockBall /></TopButton>
        </TopGroup>
        <TopGroup>
          <TopButton label="刀具居中"><ToolCenter /></TopButton>
          <TopButton label="毛坯居中"><StockCenter /></TopButton>
          <TopButton label="机床居中" active><MachineCenter /></TopButton>
        </TopGroup>
        <div className="flex gap-px">
          <TopGroup>
            <TopButton label="导出"><RedBallExport /></TopButton>
            <TopButton label="输出文件"><DocExport /></TopButton>
            <Overflow />
          </TopGroup>
          <TopGroup>
            <TopButton label="退出"><Exit /></TopButton>
            <Overflow />
          </TopGroup>
        </div>
      </div>

      <div className="flex h-[34px] shrink-0 gap-[13px] overflow-hidden bg-[#e6e6e6] pb-px">
        <Group>
          <Tool label="适合窗口"><FitAll /></Tool>
          <Sep />
          <Tool label="等轴测"><IsoAxes /></Tool>
          <Tool label="顶视图"><Cube face="top" /></Tool>
          <Tool label="前视图"><Cube face="left" /></Tool>
          <Tool label="右视图"><Cube face="right" /></Tool>
          <Tool label="底视图"><Cube face="bottom" /></Tool>
          <Tool label="左视图"><Cube face="backLeft" /></Tool>
          <Tool label="后视图"><Cube face="backRight" /></Tool>
        </Group>
        <Group>
          <Tool label="显示刀路"><EyePath /></Tool>
          <Tool label="显示刀具" menu active><EyeTool /></Tool>
          <Tool label="显示工件" menu><EyePart /></Tool>
          <Tool label="显示毛坯" menu active><EyeStock /></Tool>
          <Tool label="显示包围盒"><EyeCube /></Tool>
          <Tool label="显示机床" menu disabled><EyeMachine /></Tool>
        </Group>
        <Group>
          <Tool label="曲面点"><Dish dx={10} dy={14} /></Tool>
          <Tool label="曲面边"><Dish dx={4} dy={20} /></Tool>
          <Sep />
          <Tool label="曲线一"><CurveA /></Tool>
          <Tool label="曲线二"><CurveB /></Tool>
          <Sep />
          <Tool label="刀尾"><CurveMill /></Tool>
          <Tool label="刀首"><MillCurve /></Tool>
          <Tool label="间隙"><MillGap /></Tool>
          <Sep />
          <Tool label="刀轴"><MillFan /></Tool>
          <Tool label="节点"><CurveNodes /></Tool>
          <Tool label="弱节点"><CurveFaint /></Tool>
          <Tool label="闭环"><CurveLoop /></Tool>
        </Group>
        <Group>
          <Tool label="增加"><Waves sign="+" /></Tool>
          <Tool label="减少"><Waves sign="-" /></Tool>
          <Overflow />
        </Group>
      </div>

      <div className="flex min-h-0 flex-1">
        <main className="flex min-w-0 flex-1 flex-col pr-1">
          <div className="relative min-h-0 flex-1 bg-[linear-gradient(to_bottom,#000,#0082c4)]">
            <Scene />
            <ScaleBar />
          </div>
          <div className="h-[5px] shrink-0 border-b border-[#a0a0a0] bg-[#e2e2e2]" />
        </main>
        <aside className="flex w-[323px] shrink-0 flex-col overflow-hidden">
          <DockTitle>移动列表</DockTitle>
          <MoveList />
          <DockTabs />
          <DockTitle>轴控制</DockTitle>
          <AxisControl />
        </aside>
      </div>
    </div>
  );
}
